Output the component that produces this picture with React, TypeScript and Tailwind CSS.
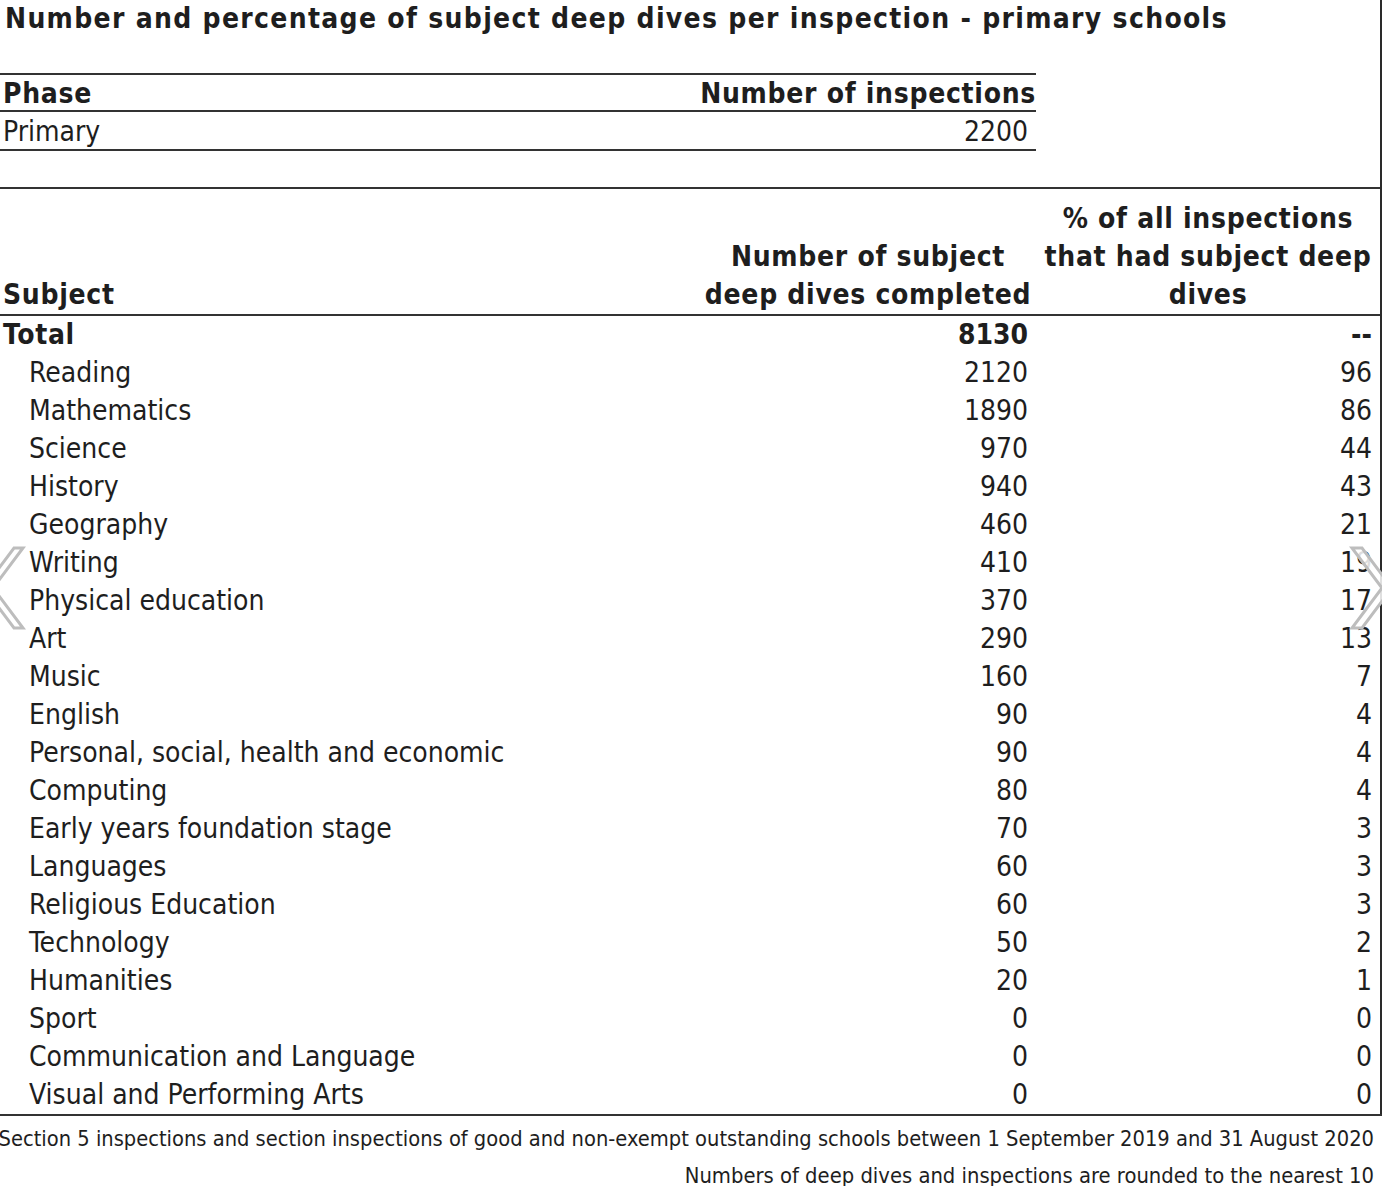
import React from "react";

const ROWS: [string, string, string][] = [
  ["Reading", "2120", "96"],
  ["Mathematics", "1890", "86"],
  ["Science", "970", "44"],
  ["History", "940", "43"],
  ["Geography", "460", "21"],
  ["Writing", "410", "19"],
  ["Physical education", "370", "17"],
  ["Art", "290", "13"],
  ["Music", "160", "7"],
  ["English", "90", "4"],
  ["Personal, social, health and economic", "90", "4"],
  ["Computing", "80", "4"],
  ["Early years foundation stage", "70", "3"],
  ["Languages", "60", "3"],
  ["Religious Education", "60", "3"],
  ["Technology", "50", "2"],
  ["Humanities", "20", "1"],
  ["Sport", "0", "0"],
  ["Communication and Language", "0", "0"],
  ["Visual and Performing Arts", "0", "0"],
];

const FONT = "font-['DejaVu_Sans_Condensed','DejaVu_Sans',sans-serif]";

export default function App() {
  return (
    <div className={`relative w-[1382px] overflow-hidden bg-white text-[#1e1e1e] ${FONT}`}>
      {/* ── TABLE AREA (right border runs to the table's bottom rule) ── */}
      <div className="border-r-2 border-[#2a2a2a]">
        <h1 className="h-[37px] pl-[5px] text-[28px] font-bold leading-[37px] tracking-[1.3px] whitespace-nowrap">
          Number and percentage of subject deep dives per inspection - primary schools
        </h1>

        {/* phase summary */}
        <div className="mt-[36px] w-[1036px] border-y-2 border-[#333] text-[28px]">
          <div className="flex h-[37px] items-center justify-between border-b-2 border-[#333] pt-[3px] pl-[3px] font-bold tracking-[0.7px]">
            <span>Phase</span>
            <span>Number of inspections</span>
          </div>
          <div className="flex h-[37px] items-center justify-between pt-[3px] pl-[3px] pr-[8px]">
            <span>Primary</span>
            <span>2200</span>
          </div>
        </div>

        {/* subject table */}
        <div className="mt-[36px] border-t-2 border-[#333] text-[28px]">
          <div className="flex items-end border-b-2 border-[#333] pt-[11px] font-bold leading-[38px] tracking-[0.7px]">
            <div className="w-[700px] pl-[3px]">Subject</div>
            <div className="w-[336px] text-center">
              Number of subject
              <br />
              deep dives completed
            </div>
            <div className="flex-1 text-center">
              % of all inspections
              <br />
              that had subject deep
              <br />
              dives
            </div>
          </div>

          <div className="flex h-[38px] items-center font-bold">
            <div className="w-[700px] pl-[3px] tracking-[0.7px]">Total</div>
            <div className="w-[336px] pr-[8px] text-right">8130</div>
            <div className="flex-1 pr-[8px] text-right">--</div>
          </div>
          {ROWS.map(([name, n, pct]) => (
            <div key={name} className="flex h-[38px] items-center">
              <div className="w-[700px] whitespace-nowrap pl-[29px]">{name}</div>
              <div className="w-[336px] pr-[8px] text-right">{n}</div>
              <div className="flex-1 pr-[8px] text-right">{pct}</div>
            </div>
          ))}
        </div>
      </div>

      {/* ── FOOTNOTES ── */}
      <div className="flex flex-col items-end border-t-2 border-[#333] pt-[4px] pr-[8px] leading-[37px] whitespace-nowrap">
        <p className="text-[21.7px]">
          Section 5 inspections and section inspections of good and non-exempt outstanding schools between 1 September 2019 and 31 August 2020
        </p>
        <p className="text-[21.8px]">Numbers of deep dives and inspections are rounded to the nearest 10</p>
      </div>

      {/* carousel chevrons over the picture */}
      <svg className="absolute left-0 top-[540px]" width="30" height="100" viewBox="0 0 30 100">
        <polygon points="14,8 23,8 -7,48 23,88 14,88 -16,48" fill="white" fillOpacity="0.85" stroke="#bdbdbd" strokeWidth="3" />
      </svg>
      <svg className="absolute right-0 top-[540px]" width="34" height="100" viewBox="1348 0 34 100">
        <polygon points="1352,8 1362,8 1392,48 1362,88 1352,88 1382,48" fill="white" fillOpacity="0.85" stroke="#bdbdbd" strokeWidth="3" />
      </svg>
    </div>
  );
}
